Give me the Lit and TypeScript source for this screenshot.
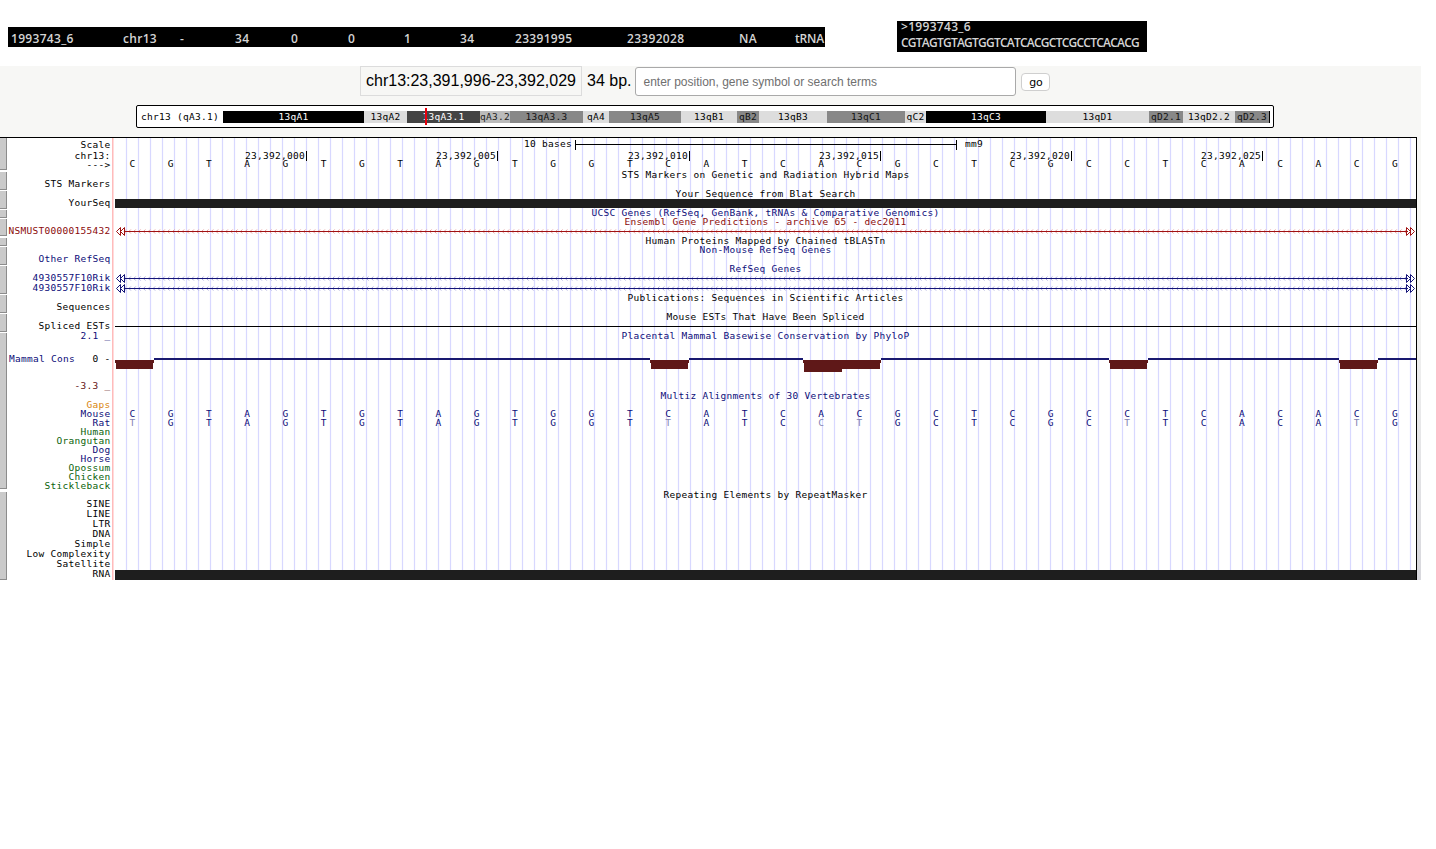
import { LitElement, css, html, svg } from "lit";
import { customElement } from "lit/decorators.js";

// Everything in the track image is in page px; the image starts at y = 137.
const imageTop = 137;
const imageWidth = 1417;
const imageBottom = 580;
const trackLeft = 115;
const trackRight = 1417;
const baseStart = 132.5;
const baseStep = 38.26;

const summaryCells = [
  ["1993743_6", 112],
  ["chr13", 57],
  ["-", 55],
  ["34", 56],
  ["0", 57],
  ["0", 56],
  ["1", 56],
  ["34", 55],
  ["23391995", 112],
  ["23392028", 112],
  ["NA", 56],
  ["tRNA", 30],
] as const;

const bands = [
  ["13qA1", 141, "black"],
  ["13qA2", 43, "pale"],
  ["13qA3.1", 73, "dark"],
  ["qA3.2", 30, "light"],
  ["13qA3.3", 73, "mid"],
  ["qA4", 26, "pale"],
  ["13qA5", 72, "mid"],
  ["13qB1", 56, "pale"],
  ["qB2", 22, "mid"],
  ["13qB3", 68, "pale"],
  ["13qC1", 78, "mid"],
  ["qC2", 21, "pale"],
  ["13qC3", 120, "black"],
  ["13qD1", 103, "pale"],
  ["qD2.1", 34, "mid"],
  ["13qD2.2", 52, "pale"],
  ["qD2.3", 34, "mid"],
] as const;

const railSegments = [
  [138, 170],
  [172, 190],
  [191, 209],
  [210, 218],
  [219, 236],
  [238, 246],
  [247, 265],
  [266, 294],
  [295, 313],
  [314, 332],
  [333, 489],
  [492, 580],
];

const labels: [string, number, string][] = [
  ["Scale", 145, "ink"],
  ["chr13:", 156, "ink"],
  ["--->", 165, "ink"],
  ["STS Markers", 184, "ink"],
  ["YourSeq", 203, "ink"],
  ["NSMUST00000155432", 231, "red"],
  ["Other RefSeq", 259, "navy"],
  ["4930557F10Rik", 278, "navy"],
  ["4930557F10Rik", 288, "navy"],
  ["Sequences", 307, "ink"],
  ["Spliced ESTs", 326, "ink"],
  ["2.1 _", 336, "navy"],
  ["0 -", 359, "ink"],
  ["-3.3 _", 386, "brown"],
  ["Gaps", 405, "orange"],
  ["Mouse", 414, "navy"],
  ["Rat", 423, "navy"],
  ["Human", 432, "green"],
  ["Orangutan", 441, "green"],
  ["Dog", 450, "navy"],
  ["Horse", 459, "navy"],
  ["Opossum", 468, "green"],
  ["Chicken", 477, "green"],
  ["Stickleback", 486, "green"],
  ["SINE", 504, "ink"],
  ["LINE", 514, "ink"],
  ["LTR", 524, "ink"],
  ["DNA", 534, "ink"],
  ["Simple", 544, "ink"],
  ["Low Complexity", 554, "ink"],
  ["Satellite", 564, "ink"],
  ["RNA", 574, "ink"],
];

const titles: [string, number, string][] = [
  ["STS Markers on Genetic and Radiation Hybrid Maps", 175, "ink"],
  ["Your Sequence from Blat Search", 194, "ink"],
  ["UCSC Genes (RefSeq, GenBank, tRNAs & Comparative Genomics)", 213, "navy"],
  ["Ensembl Gene Predictions - archive 65 - dec2011", 222, "red"],
  ["Human Proteins Mapped by Chained tBLASTn", 241, "ink"],
  ["Non-Mouse RefSeq Genes", 250, "navy"],
  ["RefSeq Genes", 269, "navy"],
  ["Publications: Sequences in Scientific Articles", 298, "ink"],
  ["Mouse ESTs That Have Been Spliced", 317, "ink"],
  ["Placental Mammal Basewise Conservation by PhyloP", 336, "navy"],
  ["Multiz Alignments of 30 Vertebrates", 396, "navy"],
  ["Repeating Elements by RepeatMasker", 495, "ink"],
];

const rulerTicks = [
  ["23,392,000", 306],
  ["23,392,005", 497],
  ["23,392,010", 689],
  ["23,392,015", 880],
  ["23,392,020", 1071],
  ["23,392,025", 1262],
] as const;

const mouseBases = "CGTAGTGTAGTGGTCATCACGCTCGCCTCACACG";
const ratBases = "TGTAGTGTAGTGGTTATCCTGCTCGCTTCACATG";

// x ranges of the conservation track: below-zero blocks, the line fills the rest
const consBlocks = [
  [115, 154],
  [650, 689],
  [803, 881],
  [1109, 1148],
  [1339, 1378],
];

const range = (from: number, to: number, step: number): number[] => {
  const out: number[] = [];
  for (let x = from; x < to; x += step) out.push(x);
  return out;
};

const label = (text: string, y: number, tone: string, x = 110.5) =>
  svg`<text class="t end ${tone}" x=${x} y=${y + 3}>${text}</text>`;

const geneLine = (y: number, tone: string) => {
  const chevrons = range(124, 1406, 4.85)
    .map((x) => `M${x + 2} ${y - 1.5}L${x} ${y + 0.5}L${x + 2} ${y + 2.5}`)
    .join("");
  const head = (x: number, dir: number) =>
    `M${x} ${y - 3.5}L${x - 4 * dir} ${y + 0.5}L${x} ${y + 4.5}Z`;
  return svg`
    <path class="chev-${tone}" d=${chevrons}></path>
    <rect class="fill-${tone}" x="124" y=${y} width="1284" height="1"></rect>
    <path class="head-${tone}" d="${head(120.5, 1)}${head(124.5, 1)}"></path>
    <path class="head-${tone}" d="${head(1406.5, -1)}${head(1410.5, -1)}"></path>
  `;
};

@customElement("app-root")
export class AppRoot extends LitElement {
  static styles = css`
    :host {
      display: block;
      font-family: "Liberation Sans", Arial, sans-serif;
      background: #fff;
    }

    .top {
      display: flex;
      align-items: flex-start;
      height: 45px;
      padding: 21px 0 0 8px;
      font-family: "Open Sans", sans-serif;
      font-size: 12px;
      font-weight: 600;
      letter-spacing: 0.3px;
      color: #d4d4d4;
    }

    .summary {
      display: flex;
      width: 817px;
      height: 20px;
      margin-top: 6px;
      line-height: 23px;
      background: #000;
    }

    .summary span {
      flex: none;
      box-sizing: border-box;
      padding-left: 3px;
      white-space: nowrap;
    }

    .summary span:last-child {
      letter-spacing: -0.2px;
    }

    .fasta {
      display: flow-root;
      width: 246px;
      height: 31px;
      margin-left: 72px;
      padding-left: 4px;
      background: #000;
      white-space: nowrap;
    }

    .fasta-lines {
      margin-top: -2px;
      line-height: 16px;
    }

    .seq {
      letter-spacing: -0.76px;
    }

    .nav {
      width: 1421px;
      height: 71px;
      background: #f7f7f5;
    }

    .search {
      display: flex;
      align-items: flex-start;
      height: 30px;
      padding-left: 360px;
      font-size: 16px;
      color: #000;
    }

    .position {
      box-sizing: border-box;
      width: 222px;
      height: 30px;
      border: 1px solid #dcdcdc;
      padding-left: 5px;
      line-height: 28px;
      white-space: nowrap;
    }

    .size {
      margin-left: 5px;
      line-height: 30px;
    }

    .query {
      box-sizing: border-box;
      width: 381px;
      height: 29px;
      margin: 1px 0 0 4px;
      border: 1px solid #a9a9a9;
      border-radius: 3px;
      padding: 0 7px;
      background: #fff;
      font: 12px "Liberation Sans", Arial, sans-serif;
      color: #000;
    }

    .query::placeholder {
      color: #6f6f6f;
    }

    .go {
      box-sizing: border-box;
      width: 29px;
      height: 18px;
      margin: 7px 0 0 5px;
      border: 1px solid #cfcfcf;
      border-radius: 4px;
      padding: 0;
      background: #fff;
      font: 11px "DejaVu Sans", sans-serif;
      color: #000;
    }

    .ideogram {
      position: relative;
      box-sizing: border-box;
      display: flex;
      align-items: center;
      width: 1138px;
      height: 23px;
      margin: 9px 0 0 136px;
      border: 1px solid #000;
      border-radius: 2px;
      background: #fff;
      font: 9.5px/11px "DejaVu Sans Mono", monospace;
      letter-spacing: 0.28px;
    }

    .chrom {
      flex: none;
      width: 86px;
      padding-left: 4px;
      box-sizing: border-box;
      white-space: nowrap;
    }

    .bands {
      display: flex;
      box-sizing: border-box;
      height: 12px;
      border-right: 1px solid #000;
    }

    .band {
      flex: none;
      overflow: hidden;
      text-align: center;
      white-space: nowrap;
    }

    .black { background: #000; color: #fff; }
    .dark { background: #444; color: #fff; }
    .mid { background: #888; color: #111; }
    .light { background: #bbb; color: #222; }
    .pale { background: #ddd; color: #000; }

    .marker {
      position: absolute;
      top: 2px;
      left: 288px;
      width: 2px;
      height: 17px;
      background: #e8000d;
    }

    .image-row {
      display: flex;
    }

    .image {
      display: block;
      flex: none;
    }

    .edge {
      flex: none;
      width: 4px;
      background: linear-gradient(#f7f7f5, #f7f7f5 30%, #d8d8dd);
    }

    .t {
      font: 9.5px "DejaVu Sans Mono", monospace;
      letter-spacing: 0.28px;
      white-space: pre;
    }

    .end { text-anchor: end; }
    .mid-anchor { text-anchor: middle; }

    .ink { fill: #000; }
    .navy { fill: #0c0c78; }
    .red { fill: #8b0a0a; }
    .brown { fill: #641414; }
    .orange { fill: #d9860f; }
    .green { fill: #0b630b; }
    .faded { fill: #8484b4; }

    .grid { stroke: #d8d8ff; stroke-width: 1.2; }
    .guide { stroke: #ffb0b0; stroke-width: 1.3; }
    .rule { stroke: #000; stroke-width: 1; }
    .bar { fill: #1e1e1e; }
    .rail { fill: #cacaca; }
    .rail-edge { fill: #8c8c8c; }
    .cons-line { fill: #191970; }
    .cons-block { fill: #5f1818; }

    .fill-red { fill: #a01212; }
    .fill-navy { fill: #141478; }
    .chev-red { fill: none; stroke: #e8a0a0; stroke-width: 1; }
    .chev-navy { fill: none; stroke: #a8a8dc; stroke-width: 1; }
    .head-red { fill: none; stroke: #a01212; stroke-width: 1; }
    .head-navy { fill: none; stroke: #141478; stroke-width: 1; }
  `;

  private renderTracks() {
    const baseX = (i: number) => baseStart + i * baseStep;
    const baseRow = (bases: string, y: number, tone: (i: number) => string) =>
      [...bases].map(
        (base, i) =>
          svg`<text class="t mid-anchor ${tone(i)}" x=${baseX(i)} y=${y + 3}>${base}</text>`,
      );

    // the conservation line runs between the blocks
    const lineGaps = consBlocks.map(([, end], i) => [
      end,
      consBlocks[i + 1]?.[0] ?? trackRight,
    ]);

    return svg`
      ${range(126, 1416, 12).map(
        (x) => svg`<line class="grid" x1=${x + 0.5} x2=${x + 0.5} y1="138" y2=${imageBottom}></line>`,
      )}
      <line class="guide" x1="112.8" x2="112.8" y1="138" y2=${imageBottom}></line>

      ${railSegments.map(
        ([top, bottom]) => svg`
          <rect class="rail" x="0" y=${top} width="7" height=${bottom - top}></rect>
          <rect class="rail-edge" x="6" y=${top} width="1" height=${bottom - top}></rect>
          <rect class="rail-edge" x="0" y=${bottom - 1} width="7" height="1"></rect>
        `,
      )}

      ${labels.map(([text, y, tone]) => label(text, y, tone))}
      <text class="t navy" x="9" y="362">Mammal Cons</text>
      ${titles.map(
        ([text, y, tone]) =>
          svg`<text class="t mid-anchor ${tone}" x="765.5" y=${y + 3}>${text}</text>`,
      )}

      <text class="t end ink" x="572" y="147">10 bases</text>
      <line class="rule" x1="575" x2="957" y1="144.5" y2="144.5"></line>
      <line class="rule" x1="575.5" x2="575.5" y1="140" y2="150"></line>
      <line class="rule" x1="956.5" x2="956.5" y1="140" y2="150"></line>
      <text class="t ink" x="965" y="147">mm9</text>
      ${rulerTicks.map(
        ([text, x]) => svg`
          <text class="t end ink" x=${x - 1} y="159">${text}</text>
          <line class="rule" x1=${x + 0.5} x2=${x + 0.5} y1="151" y2="161"></line>
        `,
      )}
      ${baseRow(mouseBases, 164, () => "ink")}

      <rect class="bar" x=${trackLeft} y="199" width=${trackRight - trackLeft} height="9"></rect>
      ${geneLine(231, "red")}
      ${geneLine(278, "navy")}
      ${geneLine(288, "navy")}
      <rect class="ink" x=${trackLeft} y="326" width=${trackRight - trackLeft} height="1"></rect>

      ${lineGaps.map(
        ([from, to]) =>
          svg`<rect class="cons-line" x=${from} y="358" width=${to - from} height="2"></rect>`,
      )}
      ${consBlocks.map(
        ([from, to]) => svg`
          <rect class="cons-block" x=${from} y="360" width=${to - from} height="3"></rect>
          <rect class="cons-block" x=${from + 1} y="363" width=${to - from - 2} height="6"></rect>
        `,
      )}
      <rect class="cons-block" x="804" y="369" width="38" height="3"></rect>

      ${baseRow(mouseBases, 414, () => "navy")}
      ${baseRow(ratBases, 423, (i) => (ratBases[i] === mouseBases[i] ? "navy" : "faded"))}

      <rect class="bar" x=${trackLeft} y="570" width=${trackRight - trackLeft} height="10"></rect>

      <line class="rule" x1="0" x2=${imageWidth} y1="137.5" y2="137.5"></line>
      <line class="rule" x1="1416.5" x2="1416.5" y1="137" y2=${imageBottom}></line>
    `;
  }

  render() {
    const height = imageBottom - imageTop;

    return html`
      <div class="top">
        <div class="summary">
          ${summaryCells.map(
            ([text, width]) => html`<span style="width:${width}px">${text}</span>`,
          )}
        </div>
        <div class="fasta">
          <div class="fasta-lines">
            &gt;1993743_6<br /><span class="seq">CGTAGTGTAGTGGTCATCACGCTCGCCTCACACG</span>
          </div>
        </div>
      </div>

      <div class="nav">
        <div class="search">
          <div class="position">chr13:23,391,996-23,392,029</div>
          <div class="size">34 bp.</div>
          <input class="query" placeholder="enter position, gene symbol or search terms" />
          <button class="go">go</button>
        </div>
        <div class="ideogram">
          <div class="chrom">chr13 (qA3.1)</div>
          <div class="bands">
            ${bands.map(
              ([name, width, shade]) =>
                html`<div class="band ${shade}" style="width:${width}px">${name}</div>`,
            )}
          </div>
          <div class="marker"></div>
        </div>
      </div>

      <div class="image-row">
        <svg
          class="image"
          width=${imageWidth}
          height=${height}
          viewBox="0 ${imageTop} ${imageWidth} ${height}"
        >
          ${this.renderTracks()}
        </svg>
        <div class="edge"></div>
      </div>
    `;
  }
}
